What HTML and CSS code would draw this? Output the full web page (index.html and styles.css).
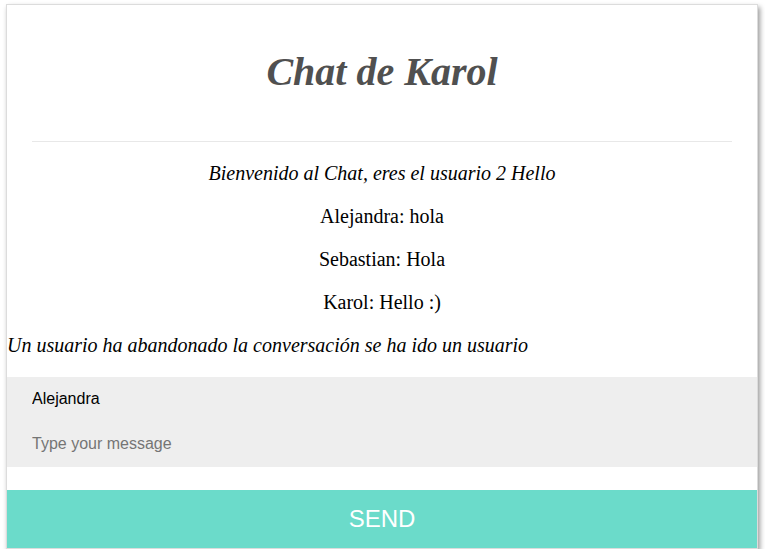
FILE: index.html
```html
<!DOCTYPE html>
<html lang="es">
<head>
<meta charset="utf-8">
<title>Chat de Karol</title>
<link rel="stylesheet" href="styles.css">
</head>
<body>
<div class="card">
  <header class="header">
    <h1 class="title">Chat de Karol</h1>
    <hr class="divider">
  </header>
  <div class="messages">
    <p class="msg msg-info">Bienvenido al Chat, eres el usuario 2 Hello</p>
    <p class="msg">Alejandra: hola</p>
    <p class="msg">Sebastian: Hola</p>
    <p class="msg">Karol: Hello :)</p>
    <p class="msg msg-left">Un usuario ha abandonado la conversación se ha ido un usuario</p>
  </div>
  <form class="form">
    <div class="inputs">
      <input class="field" type="text" value="Alejandra">
      <input class="field" type="text" placeholder="Type your message">
    </div>
    <button class="send" type="button">SEND</button>
  </form>
</div>
</body>
</html>
```

FILE: styles.css
```css
html, body {
  margin: 0;
  padding: 0;
  background: #ffffff;
}

body {
  font-family: "Liberation Serif", "Times New Roman", serif;
}

.card {
  margin: 4px 0 0 6px;
  width: 750px;
  border: 1px solid #dcdcdc;
  box-shadow: 2px 3px 5px rgba(0, 0, 0, 0.4);
  background: #ffffff;
}

.header {
  padding: 44px 25px 0;
}

.title {
  margin: 0;
  height: 46px;
  line-height: 46px;
  text-align: center;
  font-family: "Liberation Serif", "Times New Roman", serif;
  font-style: italic;
  font-weight: bold;
  font-size: 40px;
  color: #505050;
}

.divider {
  margin: 46px 0 0;
  border: 0;
  border-top: 1px solid #e8e8e8;
  height: 0;
}

.messages {
  padding: 20px 0 20px 0;
  display: flex;
  flex-direction: column;
  gap: 20px;
}

.msg {
  margin: 0;
  font-size: 20px;
  line-height: 23px;
  text-align: center;
  color: #000000;
}

.msg-info {
  font-style: italic;
}

.msg-left {
  text-align: left;
  font-style: italic;
}

.form {
  display: flex;
  flex-direction: column;
  gap: 23px;
  margin: 0;
}

.inputs {
  display: flex;
  flex-direction: column;
  background: #eeeeee;
}

.field {
  box-sizing: border-box;
  height: 45px;
  width: 100%;
  margin: 0;
  border: 0;
  padding: 0 25px 2px;
  background: #eeeeee;
  font-family: "Liberation Sans", Arial, sans-serif;
  font-size: 16px;
  color: #000000;
  outline: none;
}

.field::placeholder {
  color: #757575;
}

.send {
  display: block;
  width: 100%;
  height: 58px;
  margin: 0;
  border: 0;
  padding: 0;
  background: #6bdbca;
  color: #ffffff;
  font-family: "Liberation Sans", Arial, sans-serif;
  font-size: 24px;
  cursor: pointer;
}
```
